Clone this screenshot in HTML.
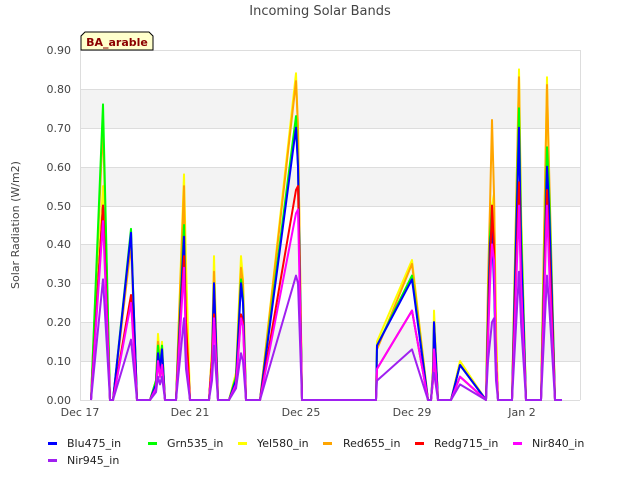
<!DOCTYPE html>
<html><head><meta charset="utf-8"><style>
body{margin:0;background:#fff;width:640px;height:480px;overflow:hidden;font-family:"DejaVu Sans","Liberation Sans",sans-serif}
</style></head><body>
<svg width="640" height="480" xmlns="http://www.w3.org/2000/svg" font-family="DejaVu Sans, Liberation Sans, sans-serif">
<rect width="640" height="480" fill="#fff"/>
<text x="320" y="15" text-anchor="middle" font-size="13" fill="#444">Incoming Solar Bands</text>
<rect x="80" y="89" width="500" height="39" fill="#f3f3f3"/>
<rect x="80" y="167" width="500" height="39" fill="#f3f3f3"/>
<rect x="80" y="245" width="500" height="38" fill="#f3f3f3"/>
<rect x="80" y="322" width="500" height="39" fill="#f3f3f3"/>
<g stroke="#ddd" stroke-width="1">
<line x1="80" x2="580" y1="50.5" y2="50.5"/><line x1="80" x2="580" y1="89.5" y2="89.5"/><line x1="80" x2="580" y1="128.5" y2="128.5"/><line x1="80" x2="580" y1="167.5" y2="167.5"/><line x1="80" x2="580" y1="206.5" y2="206.5"/><line x1="80" x2="580" y1="244.5" y2="244.5"/><line x1="80" x2="580" y1="283.5" y2="283.5"/><line x1="80" x2="580" y1="322.5" y2="322.5"/><line x1="80" x2="580" y1="361.5" y2="361.5"/>
<line x1="80.5" x2="80.5" y1="50" y2="400"/><line x1="580.5" x2="580.5" y1="50" y2="400"/><line x1="80" x2="580" y1="400.5" y2="400.5"/>
</g>
<g font-size="11" fill="#444" text-anchor="end">
<text x="71" y="54">0.90</text><text x="71" y="93">0.80</text><text x="71" y="132">0.70</text><text x="71" y="171">0.60</text><text x="71" y="210">0.50</text><text x="71" y="248">0.40</text><text x="71" y="287">0.30</text><text x="71" y="326">0.20</text><text x="71" y="365">0.10</text><text x="71" y="404">0.00</text>
</g>
<g font-size="11" fill="#444" text-anchor="middle">
<text x="80" y="416">Dec 17</text><text x="190" y="416">Dec 21</text><text x="301" y="416">Dec 25</text><text x="412" y="416">Dec 29</text><text x="522" y="416">Jan 2</text>
</g>
<text x="566" y="434" font-size="11" fill="#444" text-anchor="middle">Time</text>
<rect x="540" y="424" width="60" height="10" fill="#fff"/>
<text transform="translate(19,225) rotate(-90)" font-size="11" fill="#444" text-anchor="middle">Solar Radiation (W/m2)</text>
<g id="lines" fill="none" stroke-width="2" stroke-linejoin="round"></g>
<path d="M81,50 L81,36 L85,32 L149,32 L153,36 L153,50 Z" fill="#ffffcc" stroke="#000" stroke-width="1"/>
<text x="117" y="46" font-size="11" font-weight="bold" fill="#8b0000" text-anchor="middle">BA_arable</text>
<g font-size="11" fill="#222">
<rect x="48" y="442" width="9" height="3" fill="#0000ff"/><text x="67" y="447">Blu475_in</text>
<rect x="148" y="442" width="9" height="3" fill="#00ff00"/><text x="167" y="447">Grn535_in</text>
<rect x="238" y="442" width="9" height="3" fill="#ffff00"/><text x="257" y="447">Yel580_in</text>
<rect x="323" y="442" width="9" height="3" fill="#ffa500"/><text x="343" y="447">Red655_in</text>
<rect x="415" y="442" width="9" height="3" fill="#ff0000"/><text x="434" y="447">Redg715_in</text>
<rect x="513" y="442" width="9" height="3" fill="#ff00ff"/><text x="532" y="447">Nir840_in</text>
<rect x="48" y="459" width="9" height="3" fill="#a020f0"/><text x="67" y="464">Nir945_in</text>
</g>
</svg>
<script>
// columns: x, Blu, Grn, Yel, Red, Redg, Nir840, Nir945
var D=[
[91,0,0,0,0,0,0,0],[103,.5,.76,.55,.71,.5,.46,.31],[110,0,0,0,0,0,0,0],[113,0,0,0,0,0,0,0],
[131,.43,.44,.42,.4,.27,.25,.155],[137,0,0,0,0,0,0,0],[150,0,0,0,0,0,0,0],[156,.04,.05,.05,.05,.03,.03,.02],
[158,.12,.14,.17,.15,.1,.1,.06],[160,.08,.09,.1,.09,.06,.06,.04],[162,.13,.14,.15,.13,.09,.09,.06],[165,0,0,0,0,0,0,0],
[176,0,0,0,0,0,0,0],[184,.42,.45,.58,.55,.37,.34,.21],[186,.15,.18,.35,.2,.2,.12,.08],[190,0,0,0,0,0,0,0],
[209,0,0,0,0,0,0,0],[212,.1,.1,.13,.12,.1,.08,.05],[214,.3,.3,.37,.33,.22,.21,.14],[218,0,0,0,0,0,0,0],
[229,0,0,0,0,0,0,0],[236,.05,.06,.07,.06,.04,.04,.03],[241,.3,.31,.37,.34,.22,.21,.12],[243,.25,.26,.31,.3,.2,.19,.1],[246,0,0,0,0,0,0,0],
[260,0,0,0,0,0,0,0],[296,.7,.73,.84,.82,.54,.48,.32],[298,.6,.6,.7,.7,.55,.49,.3],[302,0,0,0,0,0,0,0],
[376,0,0,0,0,0,0,0],[377,.14,.14,.15,.13,.08,.08,.05],[412,.31,.32,.36,.35,.23,.23,.13],[428,0,0,0,0,0,0,0],[431,0,0,0,0,0,0,0],
[433,.06,.07,.09,.07,.05,.05,.07],[434,.2,.2,.23,.2,.13,.13,.07],[438,0,0,0,0,0,0,0],[451,0,0,0,0,0,0,0],
[460,.09,.09,.1,.09,.06,.06,.04],[486,0,0,0,0,0,0,0],[488,.2,.22,.25,.3,.17,.15,.1],[490,.4,.42,.45,.5,.34,.3,.15],
[492,.45,.5,.5,.72,.5,.4,.2],[494,.3,.32,.53,.53,.39,.36,.21],[496,.1,.1,.2,.15,.1,.1,.05],[498,0,0,0,0,0,0,0],
[512,0,0,0,0,0,0,0],[519,.7,.75,.85,.83,.56,.5,.33],[521,.4,.45,.5,.45,.3,.3,.2],[526,0,0,0,0,0,0,0],
[541,0,0,0,0,0,0,0],[547,.6,.65,.83,.81,.54,.5,.32],[549,.5,.55,.55,.6,.4,.35,.25],[555,0,0,0,0,0,0,0],[562,0,0,0,0,0,0,0]];
var C=['#0000ff','#00ff00','#ffff00','#ffa500','#ff0000','#ff00ff','#a020f0'];
var order=[2,3,1,0,4,5,6];var g=document.getElementById('lines');var s='';
order.forEach(function(k){var p=D.map(function(r){return r[0]+','+(400-r[k+1]*388.9).toFixed(1)}).join(' ');
s+='<polyline points="'+p+'" stroke="'+C[k]+'"/>';});
g.innerHTML=s;
</script>
</body></html>
